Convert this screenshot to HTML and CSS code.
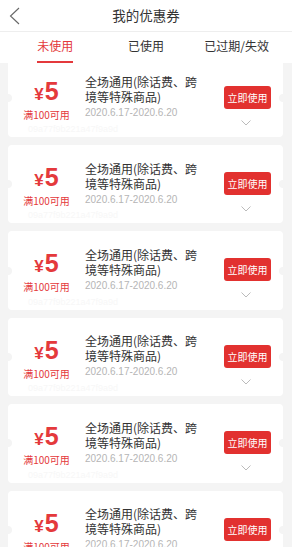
FILE: index.html
```html
<!DOCTYPE html>
<html lang="zh">
<head>
<meta charset="utf-8">
<title>我的优惠券</title>
<link rel="stylesheet" href="styles.css">
</head>
<body>
<div class="page">
  <header class="topbar">
    <svg class="back" width="11" height="18" viewBox="0 0 11 18"><path d="M10 1 L1.5 9 L10 17" fill="none" stroke="#666" stroke-width="1.1"/></svg>
    <h1 class="title">我的优惠券</h1>
  </header>
  <nav class="tabs">
    <div class="tab active"><span>未使用</span></div>
    <div class="tab"><span>已使用</span></div>
    <div class="tab"><span>已过期/失效</span></div>
  </nav>
  <main class="viewport">
    <div class="list">
      <div class="card">
        <div class="amount"><div class="price"><span class="yen">¥</span><span class="num">5</span></div><div class="cond">满100可用</div></div>
        <div class="info"><div class="name">全场通用(除话费、跨境等特殊商品)</div><div class="date">2020.6.17-2020.6.20</div></div>
        <div class="action"><button class="use">立即使用</button><svg class="more" width="10" height="6" viewBox="0 0 10 6"><path d="M0.5 0.5 L5 5 L9.5 0.5" fill="none" stroke="#bbb" stroke-width="1"/></svg></div>
        <div class="code">09a77f9b221a47f9a9d</div>
      </div>
      <div class="card">
        <div class="amount"><div class="price"><span class="yen">¥</span><span class="num">5</span></div><div class="cond">满100可用</div></div>
        <div class="info"><div class="name">全场通用(除话费、跨境等特殊商品)</div><div class="date">2020.6.17-2020.6.20</div></div>
        <div class="action"><button class="use">立即使用</button><svg class="more" width="10" height="6" viewBox="0 0 10 6"><path d="M0.5 0.5 L5 5 L9.5 0.5" fill="none" stroke="#bbb" stroke-width="1"/></svg></div>
        <div class="code">09a77f9b221a47f9a9d</div>
      </div>
      <div class="card">
        <div class="amount"><div class="price"><span class="yen">¥</span><span class="num">5</span></div><div class="cond">满100可用</div></div>
        <div class="info"><div class="name">全场通用(除话费、跨境等特殊商品)</div><div class="date">2020.6.17-2020.6.20</div></div>
        <div class="action"><button class="use">立即使用</button><svg class="more" width="10" height="6" viewBox="0 0 10 6"><path d="M0.5 0.5 L5 5 L9.5 0.5" fill="none" stroke="#bbb" stroke-width="1"/></svg></div>
        <div class="code">09a77f9b221a47f9a9d</div>
      </div>
      <div class="card">
        <div class="amount"><div class="price"><span class="yen">¥</span><span class="num">5</span></div><div class="cond">满100可用</div></div>
        <div class="info"><div class="name">全场通用(除话费、跨境等特殊商品)</div><div class="date">2020.6.17-2020.6.20</div></div>
        <div class="action"><button class="use">立即使用</button><svg class="more" width="10" height="6" viewBox="0 0 10 6"><path d="M0.5 0.5 L5 5 L9.5 0.5" fill="none" stroke="#bbb" stroke-width="1"/></svg></div>
        <div class="code">09a77f9b221a47f9a9d</div>
      </div>
      <div class="card">
        <div class="amount"><div class="price"><span class="yen">¥</span><span class="num">5</span></div><div class="cond">满100可用</div></div>
        <div class="info"><div class="name">全场通用(除话费、跨境等特殊商品)</div><div class="date">2020.6.17-2020.6.20</div></div>
        <div class="action"><button class="use">立即使用</button><svg class="more" width="10" height="6" viewBox="0 0 10 6"><path d="M0.5 0.5 L5 5 L9.5 0.5" fill="none" stroke="#bbb" stroke-width="1"/></svg></div>
        <div class="code">09a77f9b221a47f9a9d</div>
      </div>
      <div class="card">
        <div class="amount"><div class="price"><span class="yen">¥</span><span class="num">5</span></div><div class="cond">满100可用</div></div>
        <div class="info"><div class="name">全场通用(除话费、跨境等特殊商品)</div><div class="date">2020.6.17-2020.6.20</div></div>
        <div class="action"><button class="use">立即使用</button><svg class="more" width="10" height="6" viewBox="0 0 10 6"><path d="M0.5 0.5 L5 5 L9.5 0.5" fill="none" stroke="#bbb" stroke-width="1"/></svg></div>
        <div class="code">09a77f9b221a47f9a9d</div>
      </div>
    </div>
  </main>
</div>
</body>
</html>
```
FILE: styles.css
```css
* { box-sizing: border-box; }
html, body { margin: 0; padding: 0; }
body {
  font-family: "Noto Sans CJK SC", "Noto Sans", "Liberation Sans", sans-serif;
  background: #f4f4f4;
  width: 292px;
  height: 547px;
  overflow: hidden;
}
.page {
  display: flex;
  flex-direction: column;
  height: 547px;
}
.topbar {
  height: 32px;
  background: #fff;
  border-bottom: 1px solid #eeeeee;
  display: grid;
  grid-template-columns: 40px 1fr 40px;
  align-items: center;
  flex: none;
}
.back {
  margin-left: 9px;
  margin-top: 0;
}
.title {
  margin: 0;
  grid-column: 2;
  text-align: center;
  font-size: 13.5px;
  font-weight: 400;
  color: #333;
  line-height: 20px;
  margin-top: -2px;
}
.tabs {
  height: 31px;
  background: #fff;
  display: grid;
  grid-template-columns: 1fr 1fr 1fr;
  padding: 0 10px;
  flex: none;
}
.tab {
  display: flex;
  justify-content: center;
  align-items: stretch;
}
.tab span {
  font-size: 12px;
  color: #333;
  line-height: 14px;
  padding-top: 7px;
  border-bottom: 2px solid transparent;
  height: 31px;
}
.tab.active span {
  color: #e4393c;
  border-bottom-color: #e4393c;
}
.viewport {
  flex: 1;
  overflow: hidden;
  padding: 0 9px 0 8px;
}
.list {
  margin-top: -4.4px;
  display: flex;
  flex-direction: column;
  gap: 8px;
}
.card {
  position: relative;
  height: 78.4px;
  flex: none;
  background: #fff;
  border-radius: 4px;
  display: grid;
  grid-template-columns: 77px 1fr 59px;
}
.card::before, .card::after {
  content: "";
  position: absolute;
  top: 50%;
  width: 8px;
  height: 8px;
  margin-top: -4px;
  border-radius: 50%;
  background: #f4f4f4;
}
.card::before { left: -4px; }
.card::after { right: -4px; }
.amount {
  display: flex;
  flex-direction: column;
  align-items: center;
  padding-top: 20px;
}
.price {
  color: #e4393c;
  font-family: "Liberation Sans", Arial, sans-serif;
  font-weight: 700;
  line-height: 24px;
  height: 24px;
  white-space: nowrap;
}
.yen { font-size: 17px; margin-right: 1px; }
.num { font-size: 25px; }
.cond {
  color: #e4393c;
  font-size: 10px;
  line-height: 14px;
  margin-top: 5px;
}
.info {
  padding-top: 15.5px;
}
.name {
  font-size: 12px;
  line-height: 15px;
  color: #333;
  width: 116px;
}
.date {
  font-family: "Liberation Sans", Arial, sans-serif;
  font-size: 10px;
  line-height: 14px;
  color: #b5b5b5;
  margin-top: 2px;
}
.action {
  display: flex;
  flex-direction: column;
  align-items: center;
  padding-top: 27px;
  padding-right: 12px;
}
.use {
  width: 47px;
  height: 23px;
  border: 0;
  border-radius: 3px;
  background: #e2312f;
  color: #fff;
  font-family: inherit;
  font-size: 10px;
  padding: 0;
  line-height: 23px;
}
.more {
  margin-top: 11px;
  margin-left: -3px;
}
.code {
  position: absolute;
  left: 20px;
  bottom: 3px;
  font-size: 9px;
  color: #f7f7f7;
  font-family: "Liberation Sans", Arial, sans-serif;
}
```
